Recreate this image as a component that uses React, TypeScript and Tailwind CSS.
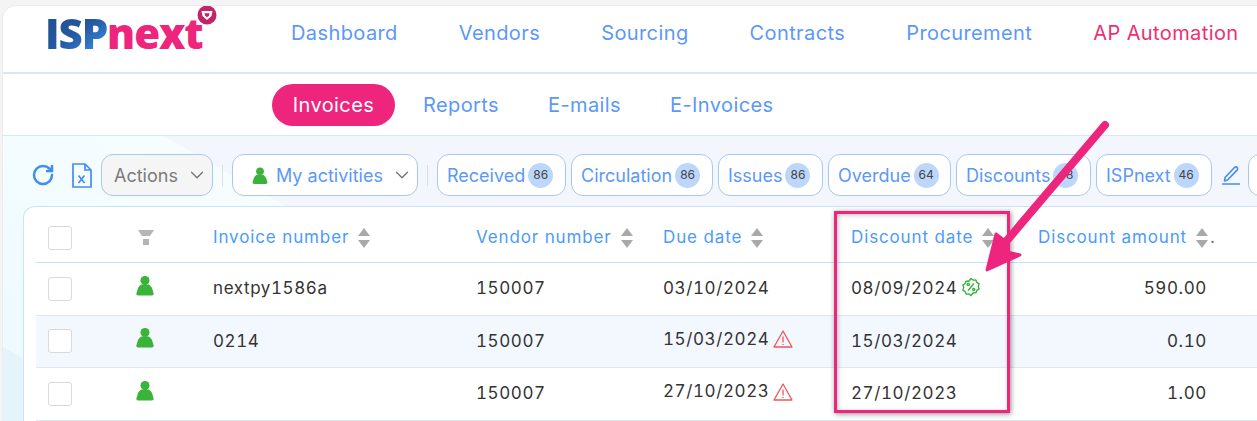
import React from 'react';
import { ChevronDown, RotateCw } from 'lucide-react';

const navItems = ['Dashboard', 'Vendors', 'Sourcing', 'Contracts', 'Procurement'];
const pills = [
    { label: 'Received', count: 86, w: 'w-[129px]' },
    { label: 'Circulation', count: 86, w: 'w-[142px]' },
    { label: 'Issues', count: 86, w: 'w-[105px]' },
    { label: 'Overdue', count: 64, w: 'w-[123px]' },
    { label: 'Discounts', count: 48, w: 'w-[135px]' },
    { label: 'ISPnext', count: 46, w: 'w-[116px]' },
];
const rows = [
    { invoice: 'nextpy1586a', vendor: '150007', due: '03/10/2024', late: false, discount: '08/09/2024', promo: true, amount: '590.00', bg: 'bg-white' },
    { invoice: '0214', vendor: '150007', due: '15/03/2024', late: true, discount: '15/03/2024', promo: false, amount: '0.10', bg: 'bg-[#f3f7fe]' },
    { invoice: '', vendor: '150007', due: '27/10/2023', late: true, discount: '27/10/2023', promo: false, amount: '1.00', bg: 'bg-white' },
];
const cols = 'grid grid-cols-[89px_76px_263px_187px_188px_187px_193px_1fr]';

const Person = ({ className }: { className: string }) => (
    <svg viewBox="0 0 20 22" className={className} fill="#39b33a">
        <circle cx="10" cy="5.5" r="5" />
        <path d="M6 10h8c2 1 3 2.500 4 4.500l1.500 5c.3 1.500-.5 2.500-2 2.500H2.500c-1.500 0-2.300-1-2-2.500l1.500-5c1-2 2-3.500 4-4.500z" />
    </svg>
);

const Sort = () => (
    <svg viewBox="0 0 14 20" className="w-[14px] h-[20px] shrink-0" fill="#a9a9a9">
        <path d="M7 0l6 8H1zM1 12h12l-6 8z" />
    </svg>
);

const Checkbox = () => <div className="w-[24px] h-[24px] bg-white border border-[#d9d9d9] rounded-[3px]" />;

const Warn = () => (
    <svg viewBox="0 0 20 18" className="w-[20px] h-[18px] ml-[4px]" fill="none" stroke="#f0565b" strokeWidth="1.300" strokeLinejoin="round">
        <path d="M10 1L19 17H1z" />
        <path d="M10 6.500v6M10 14v1" />
    </svg>
);

const Promo = () => (
    <svg viewBox="0 0 20 20" className="w-[20px] h-[20px] ml-[4px] -mt-[4px]" fill="none" stroke="#39b33a" strokeWidth="1.400" strokeLinejoin="round">
        <path d="M10 1.500l2.200 1.600 2.700-.2.900 2.500 2.300 1.400-.8 2.600.8 2.600-2.300 1.400-.9 2.500-2.700-.2L10 18.500l-2.200-1.600-2.700.2-.9-2.500-2.300-1.400.8-2.600-.8-2.600 2.300-1.400.9-2.500 2.700.2z" />
        <path d="M12.800 6.500l-5.600 7" />
        <circle cx="7.300" cy="7.500" r="1.100" />
        <circle cx="12.700" cy="12.500" r="1.100" />
    </svg>
);

const Logo = () => (
    <div className="relative w-[172px] h-[44px] flex items-center font-['Open_Sans',sans-serif] font-extrabold text-[42px] leading-none tracking-[-1.100px]">
        <span className="bg-gradient-to-br from-[#1f4f8f] via-[#25589f] to-[#3c97f5] bg-clip-text text-transparent">ISP</span>
        <span className="text-[#ee257c]">next</span>
        <svg viewBox="0 0 20 20" className="absolute left-[152px] top-[-6px] w-[20px] h-[20px]">
            <circle cx="10" cy="10" r="9.500" fill="#c2246a" />
            <path d="M4.500 6h11l-1 5-4.500 4-4.500-4z" fill="#fff" />
            <path d="M7.500 8.200h5l-.5 2.300-2 1.800-2-1.800z" fill="#c2246a" />
        </svg>
    </div>
);

const App: React.FC = () => {
    return (
        <div className="relative w-[1257px] h-[421px] overflow-hidden bg-[#f4f4f4] pt-[5px] pl-[2px] font-['Inter',sans-serif]">
            <div className="h-[416px] rounded-tl-[14px] border-t border-l border-[#ececec] overflow-hidden bg-white">
                {/* top nav */}
                <div className="h-[68px] flex items-center border-b-2 border-[#d8e9f6] pl-[42px] pb-[12px]">
                    <Logo />
                    <nav className="flex gap-[61px] ml-[74px] text-[20px] text-[#5b98fa] tracking-[0.400px]">
                        {navItems.map((item) => (
                            <span key={item}>{item}</span>
                        ))}
                        <span className="text-[#ee2f74]">AP Automation</span>
                    </nav>
                </div>

                {/* sub nav */}
                <div className="h-[62px] flex items-center pl-[269px] text-[20px] text-[#5b98fa] border-b border-[#d8e9f6] tracking-[0.400px]">
                    <span className="w-[123px] h-[42px] flex items-center justify-center rounded-full bg-[#ee257c] text-white">Invoices</span>
                    <span className="ml-[28px]">Reports</span>
                    <span className="ml-[49px]">E-mails</span>
                    <span className="ml-[49px]">E-Invoices</span>
                </div>

                {/* toolbar + table */}
                <div className="h-[285px] bg-[linear-gradient(30deg,#e5f3fa_0%,#e5f3fa_7.3%,#eefaff_7.4%,#f6fdff_37.4%,#f3f6fd_37.5%,#f3f6fd_100%)]">
                    <div className="h-[70px] flex items-center pl-[28px] pt-[8px] text-[18px]">
                        <RotateCw className="w-[24px] h-[24px] text-[#3f8ef0] shrink-0" strokeWidth={2.500} />
                        <svg viewBox="0 0 20 25" className="w-[20px] h-[25px] ml-[17px] shrink-0" fill="none" stroke="#3f8ef0" strokeWidth="1.700">
                            <path d="M1 1h12l6 6v17H1zM13 1v6h6" />
                            <path d="M6.500 12.500l6 7.500M12.500 12.500l-6 7.500" />
                        </svg>
                        <button className="ml-[9px] w-[112px] h-[42px] shrink-0 flex items-center gap-[8px] pl-[12px] rounded-[12px] border border-[#a9c9e6] bg-[#f5f5f5] text-[#7b7b7b]">
                            Actions
                            <ChevronDown className="w-[22px] h-[22px] text-[#777]" strokeWidth={1.500} />
                        </button>
                        <div className="w-px h-[21px] bg-[#d8e0e6] ml-[9px] shrink-0" />
                        <button className="ml-[9px] w-[186px] h-[42px] shrink-0 flex items-center gap-[8px] pl-[19px] rounded-[12px] border border-[#a9c9e6] bg-white text-[#5b98fa]">
                            <Person className="w-[16px] h-[17px]" />
                            My activities
                            <ChevronDown className="w-[22px] h-[22px] text-[#777]" strokeWidth={1.500} />
                        </button>
                        <div className="w-px h-[21px] bg-[#d8e0e6] ml-[9px] shrink-0" />
                        <div className="flex gap-[5px] ml-[9px] shrink-0">
                            {pills.map((pill) => (
                                <div key={pill.label} className={`${pill.w} h-[42px] flex items-center gap-[3px] pl-[9px] rounded-[12px] border border-[#a9c9e6] bg-white text-[#5b98fa]`}>
                                    {pill.label}
                                    <span className="w-[25px] h-[25px] rounded-full bg-[#bcd7fb] flex items-center justify-center text-[12px] text-[#444]">{pill.count}</span>
                                </div>
                            ))}
                        </div>
                        <svg viewBox="0 0 18 20" className="w-[18px] h-[20px] ml-[10px] shrink-0" fill="none" stroke="#3f8ef0" strokeWidth="1.600" strokeLinejoin="round">
                            <path d="M3 12.500L12.500 2.500a1.800 1.800 0 0 1 2.600 2.600L5.500 15 2.500 16z" />
                            <path d="M0 19h18" />
                        </svg>
                        <div className="w-[30px] h-[42px] ml-[8px] rounded-l-[12px] border border-[#a9c9e6] bg-white shrink-0" />
                    </div>

                    <div className="ml-[20px] h-[215px] pl-[12px] bg-white border-t border-l border-[#c9e4f7] rounded-tl-[12px]">
                        <div className={`${cols} h-[56px] pt-[7px] items-center border-b border-[#c5e2f7] text-[17px] text-[#4c9bfa] tracking-[0.870px]`}>
                            <div className="pl-[12px]"><Checkbox /></div>
                            <div className="pl-[13px]">
                                <svg viewBox="0 0 16 16" className="w-[16px] h-[16px]" fill="#b5b5b5">
                                    <path d="M0 0h16l-4 6H4zM5 9h6v6H5z" />
                                </svg>
                            </div>
                            <div className="flex items-center gap-[8px] pl-[12px]">Invoice number <Sort /></div>
                            <div className="flex items-center gap-[8px] pl-[12px]">Vendor number <Sort /></div>
                            <div className="flex items-center gap-[8px] pl-[12px]">Due date <Sort /></div>
                            <div className="flex items-center gap-[8px] pl-[12px]">Discount date <Sort /></div>
                            <div className="flex items-center gap-[8px] pl-[12px] whitespace-nowrap">Discount amount <Sort /><span className="-ml-[7px] text-[#777]">.</span></div>
                        </div>
                        {rows.map((row) => (
                            <div key={row.vendor + row.due} className={`${cols} ${row.bg} h-[52.500px] items-center border-b border-[#e2e6ee] text-[17px] text-[#333] tracking-[0.600px] tabular-nums`}>
                                <div className="pl-[12px]"><Checkbox /></div>
                                <div className="pl-[11px] -mt-[7px]"><Person className="w-[18px] h-[21px]" /></div>
                                <div className="pl-[12px]">{row.invoice}</div>
                                <div className="pl-[12px]">{row.vendor}</div>
                                <div className={`flex items-center pl-[12px] ${row.late ? '-mt-[4px]' : ''}`}>
                                    {row.due}
                                    {row.late && <Warn />}
                                </div>
                                <div className="flex items-center pl-[12px]">
                                    {row.discount}
                                    {row.promo && <Promo />}
                                </div>
                                <div className="pr-[12px] text-right">{row.amount}</div>
                            </div>
                        ))}
                    </div>
                </div>
            </div>

            {/* annotation over the screenshot */}
            <div className="absolute left-[834px] top-[211px] w-[176px] h-[202px] border-[3px] border-[#ee257c] shadow-[1px_1px_5px_rgba(0,0,0,0.45),inset_1px_1px_4px_rgba(0,0,0,0.25)]" />
            <svg className="absolute left-[960px] top-[110px] w-[170px] h-[180px]" viewBox="0 0 170 180" fill="#ee257c" stroke="#ee257c" strokeLinejoin="round" strokeLinecap="round">
                <path d="M145 15L38 141" strokeWidth="8" fill="none" />
                <path d="M27 160L36 124 48 133 47 142 60 145z" strokeWidth="3" />
            </svg>
        </div>
    );
};

export default App;
